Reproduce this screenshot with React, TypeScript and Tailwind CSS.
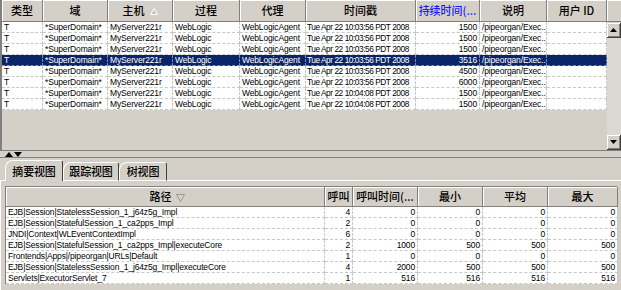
const CJK = '"Noto Sans CJK SC", "Liberation Sans", sans-serif';

type Col = { w: number; label: string; align: "l" | "r"; blue?: boolean; sort?: boolean; tight?: boolean };

const topCols: Col[] = [
  { w: 41, label: "类型", align: "l" },
  { w: 65, label: "域", align: "l" },
  { w: 65, label: "主机", align: "l", sort: true },
  { w: 67, label: "过程", align: "l" },
  { w: 66, label: "代理", align: "l" },
  { w: 110, label: "时间戳", align: "l", tight: true },
  { w: 64, label: "持续时间(...", align: "r", blue: true },
  { w: 67, label: "说明", align: "l" },
  { w: 60, label: "用户 ID", align: "l" },
];

const topRows = [
  ["10:03:56", "1500"],
  ["10:03:56", "1500"],
  ["10:03:56", "1500"],
  ["10:03:56", "3516"],
  ["10:03:56", "4500"],
  ["10:03:56", "6000"],
  ["10:04:08", "1500"],
  ["10:04:08", "1500"],
].map(([t, d]) => [
  "T",
  "*SuperDomain*",
  "MyServer221r",
  "WebLogic",
  "WebLogicAgent",
  `Tue Apr 22 ${t} PDT 2008`,
  d,
  "/pipeorgan/Exec...",
  "",
]);

const botCols: Col[] = [
  { w: 319, label: "路径", align: "l" },
  { w: 28, label: "呼叫", align: "r" },
  { w: 65, label: "呼叫时间(...", align: "r" },
  { w: 65, label: "最小", align: "r" },
  { w: 65, label: "平均", align: "r" },
  { w: 70, label: "最大", align: "r" },
];

const botRows = [
  ["EJB|Session|StatelessSession_1_j64z5g_Impl", "4", "0", "0", "0", "0"],
  ["EJB|Session|StatefulSession_1_ca2pps_Impl", "2", "0", "0", "0", "0"],
  ["JNDI|Context|WLEventContextImpl", "6", "0", "0", "0", "0"],
  ["EJB|Session|StatefulSession_1_ca2pps_Impl|executeCore", "2", "1000", "500", "500", "500"],
  ["Frontends|Apps|/pipeorgan|URLs|Default", "1", "0", "0", "0", "0"],
  ["EJB|Session|StatelessSession_1_j64z5g_Impl|executeCore", "4", "2000", "500", "500", "500"],
  ["Servlets|ExecutorServlet_7", "1", "516", "516", "516", "516"],
];

function SortUp() {
  return (
    <svg width="8" height="7" viewBox="0 0 8 7" className="ml-[5px] mt-[1px]">
      <polygon points="4,0.5 7.5,6.5 0.5,6.5" fill="#c8c4bc" stroke="#ffffff" strokeWidth="1" />
    </svg>
  );
}

function SortDown() {
  return (
    <svg width="9" height="8" viewBox="0 0 9 8" className="ml-[4px] mt-[2px]">
      <polygon points="0.5,0.5 8.5,0.5 4.5,7.5" fill="#d8d4cc" stroke="#9a968e" strokeWidth="1" />
    </svg>
  );
}

function HeaderCell({ c, h }: { c: Col; h: number }) {
  return (
    <div
      className="flex shrink-0 items-center justify-center border-r border-b border-[#808080] bg-[#d4d0c8] shadow-[inset_1px_1px_0_#ffffff] text-[11px] font-medium leading-none tracking-normal"
      style={{ width: c.w, height: h, fontFamily: CJK, color: c.blue ? "#1a1aff" : "#000" }}
    >
      <span>{c.label}</span>
      {c.sort && <SortUp />}
    </div>
  );
}

function Arrow({ up }: { up?: boolean }) {
  return (
    <div className="flex h-[15px] w-[14px] items-center justify-center border-r border-b border-[#404040] bg-[#d4d0c8] shadow-[inset_1px_1px_0_#ffffff,inset_-1px_-1px_0_#808080]">
      <svg width="7" height="4" viewBox="0 0 7 4">
        <polygon points={up ? "3.5,0 7,4 0,4" : "0,0 7,0 3.5,4"} fill="#000" />
      </svg>
    </div>
  );
}

export default function App() {
  return (
    <div
      className="flex h-[290px] w-[621px] flex-col overflow-hidden bg-[#d4d0c8] text-[8.5px] tracking-[-0.15px] text-black"
      style={{ fontFamily: '"Liberation Sans", Arial, sans-serif' }}
    >
      {/* top table */}
      <div className="flex h-[150px] shrink-0 flex-col border-l-2 border-[#808080]">
        <div className="flex h-[22px] shrink-0">
          {topCols.map((c) => (
            <HeaderCell key={c.label} c={c} h={22} />
          ))}
          <div className="h-[22px] w-[14px] shrink-0 border-b border-[#808080] bg-[#d4d0c8] shadow-[inset_1px_1px_0_#ffffff]" />
        </div>
        <div className="flex flex-1">
          <div className="flex w-[605px] flex-col">
            {topRows.map((r, i) => {
              const sel = i === 3;
              return (
                <div
                  key={i}
                  className={`flex h-[11px] leading-[10px] ${sel ? "bg-[#0a246a] text-white" : "bg-white"}`}
                >
                  {r.map((v, j) => (
                    <div
                      key={j}
                      className={`shrink-0 overflow-hidden whitespace-nowrap border-b border-r border-dashed ${
                        topCols[j].tight ? "px-[1px] text-[8.3px] tracking-[-0.45px]" : "px-[2px]"
                      } ${sel ? "border-[#7f8bb0]" : "border-[#c8c8c8]"} ${
                        topCols[j].align === "r" ? "text-right" : "text-left"
                      }`}
                      style={{ width: topCols[j].w }}
                    >
                      {v}
                    </div>
                  ))}
                </div>
              );
            })}
          </div>
          <div className="flex w-[14px] flex-col pt-[1px]">
            <Arrow up />
            <div className="flex-1 bg-[#dcd9d2]" />
            <Arrow />
          </div>
        </div>
      </div>

      {/* splitter */}
      <div className="flex h-[8px] shrink-0 items-center gap-[1px] border-t border-b border-[#808080] pl-[5px]">
        <svg width="8" height="5" viewBox="0 0 8 5">
          <polygon points="4,0 8,5 0,5" fill="#000" />
        </svg>
        <svg width="8" height="5" viewBox="0 0 8 5">
          <polygon points="0,0 8,0 4,5" fill="#000" />
        </svg>
      </div>

      {/* tabs */}
      <div className="flex h-[23px] shrink-0 items-end pt-[2px] font-medium" style={{ fontFamily: CJK }}>
        <div className="h-full w-[5px] border-b border-white" />
        <div className="flex h-[21px] w-[58px] items-center justify-center rounded-tl-[8px] rounded-tr-[3px] border-t border-l border-r border-t-white border-l-white border-r-[#404040] text-[11px]">
          摘要视图
        </div>
        <div className="flex h-[19px] w-[56px] items-center justify-center rounded-tl-[8px] rounded-tr-[3px] border-t border-l border-r border-b border-t-white border-l-white border-r-[#404040] border-b-white text-[11px]">
          跟踪视图
        </div>
        <div className="flex h-[19px] w-[48px] items-center justify-center rounded-tl-[8px] rounded-tr-[3px] border-t border-l border-r border-b border-t-white border-l-white border-r-[#404040] border-b-white text-[11px]">
          树视图
        </div>
        <div className="h-full flex-1 border-b border-white" />
      </div>

      {/* bottom panel */}
      <div className="flex flex-1 flex-col border-l border-white pl-[4px] pt-[5px]">
        <div className="flex w-[612px] flex-col border-l border-t border-[#808080]">
          <div className="flex h-[20px] shrink-0">
            {botCols.map((c, i) =>
              i === 0 ? (
                <div
                  key={c.label}
                  className="flex shrink-0 items-center justify-center border-r border-b border-[#808080] bg-[#d4d0c8] pl-[4px] shadow-[inset_1px_1px_0_#ffffff] text-[11px] font-medium leading-none tracking-normal"
                  style={{ width: c.w, height: 20, fontFamily: CJK }}
                >
                  <span>{c.label}</span>
                  <SortDown />
                </div>
              ) : (
                <HeaderCell key={c.label} c={c} h={20} />
              )
            )}
          </div>
          {botRows.map((r, i) => (
            <div key={i} className="flex h-[11px] bg-white leading-[10px]">
              {r.map((v, j) => (
                <div
                  key={j}
                  className={`shrink-0 overflow-hidden whitespace-nowrap border-b border-r border-dashed border-[#c8c8c8] px-[2px] ${
                    botCols[j].align === "r" ? "text-right" : "text-left"
                  }`}
                  style={{ width: botCols[j].w }}
                >
                  {v}
                </div>
              ))}
            </div>
          ))}
        </div>
      </div>
    </div>
  );
}
